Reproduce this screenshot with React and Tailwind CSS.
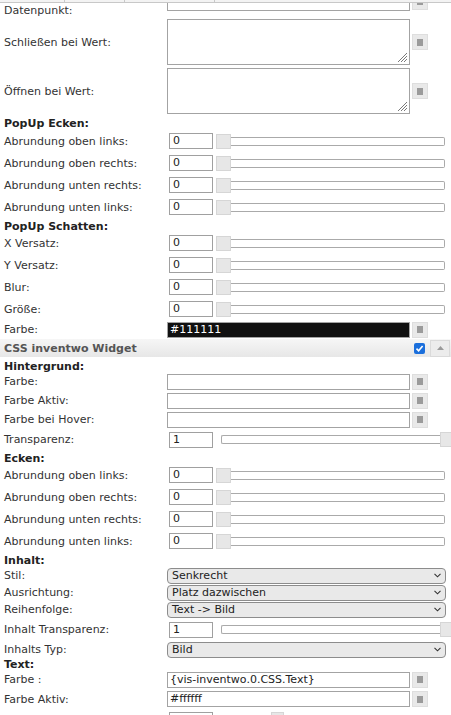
import React from 'react';

const Btn = () => (
  <div className="ml-[2px] flex h-[16px] w-[16px] shrink-0 items-center justify-center border border-[#dedede] bg-[#e9e9e9]">
    <div className="h-[7px] w-[6px] bg-[#9b9b9b]" />
  </div>
);

const Row = ({ label, h, children }) => (
  <div className={`flex items-center ${h}`}>
    <div className="w-[167px] shrink-0 pl-[4px] whitespace-nowrap">{label}</div>
    {children}
  </div>
);

const Head = ({ children, h }) => (
  <div className={`flex items-center pl-[4px] font-bold text-[#222] ${h}`}>{children}</div>
);

const TextInput = ({ value, dark }) => (
  <div className="flex items-center">
    <div
      className={`flex h-[16px] w-[243px] items-center border border-[#a3a3a3] pl-[2px] leading-[14px] ${
        dark ? 'bg-[#111111] text-white' : 'bg-white text-[#222]'
      }`}
    >
      {value}
    </div>
    <Btn />
  </div>
);

const Slider = ({ value = '0' }) => (
  <div className="flex items-center pl-[2px]">
    <div className="h-[16px] w-[44px] border border-[#a0a0a0] bg-white pl-[3px] leading-[14px] text-[#222]">{value}</div>
    <div className="ml-[3px] h-[15px] w-[15px] border border-[#d6d6d6] bg-[#e7e7e7]" />
    <div className="h-[9px] w-[214px] rounded-r-[2px] border border-l-0 border-[#aaaaaa] bg-white" />
  </div>
);

const SliderMax = ({ value = '1' }) => (
  <div className="flex items-center pl-[2px]">
    <div className="h-[16px] w-[44px] shrink-0 border border-[#a0a0a0] bg-white pl-[3px] leading-[14px] text-[#222]">{value}</div>
    <div className="ml-[8px] h-[9px] w-[219px] shrink-0 rounded-l-[2px] border border-r-0 border-[#aaaaaa] bg-white" />
    <div className="h-[15px] w-[14px] shrink-0 border border-[#d6d6d6] bg-[#e7e7e7]" />
  </div>
);

const Area = () => (
  <div className="flex items-center">
    <div className="relative h-[46px] w-[243px] border border-[#a3a3a3] bg-white">
      <svg className="absolute bottom-[1px] right-[1px]" width="11" height="11" viewBox="0 0 11 11">
        <path d="M10 1 L1 10 M10 4 L4 10 M10 7 L7 10" stroke="#7a7a7a" strokeWidth="1" />
      </svg>
    </div>
    <Btn />
  </div>
);

const Select = ({ value }) => (
  <div className="flex h-[16px] w-[279px] items-center justify-between rounded-[4px] border border-[#8c8c8c] bg-[#e9e9e9] pl-[4px] pr-[4px] text-[#222]">
    <span>{value}</span>
    <svg width="7" height="5" viewBox="0 0 7 5">
      <path d="M0.5 0.8 L3.5 3.8 L6.5 0.8" stroke="#333" strokeWidth="1.1" fill="none" />
    </svg>
  </div>
);

export default function App() {
  return (
    <div className="relative h-[715px] w-[451px] overflow-hidden bg-white font-['DejaVu_Sans','Verdana',sans-serif] text-[11px] leading-[13px] text-[#333]">
      <div className="absolute left-0 top-0 flex h-[3px] w-full border-b border-[#c8c8c8] bg-[#f3f3f3]">
        <div className="w-[65px] border-r border-[#c8c8c8]" />
        <div className="w-[60px] border-r border-[#c8c8c8]" />
        <div className="w-[90px] border-r border-[#c8c8c8]" />
      </div>

      <div className="flex h-[18px] items-start">
        <div className="w-[167px] shrink-0 pl-[4px] pt-[4px]">Datenpunkt:</div>
        <div className="h-[11px] w-[243px] border border-t-0 border-[#a3a3a3] bg-white" />
        <div className="ml-[2px] flex h-[10px] w-[16px] items-start justify-center border border-t-0 border-[#dedede] bg-[#e9e9e9]">
          <div className="h-[5px] w-[6px] bg-[#9b9b9b]" />
        </div>
      </div>

      <div className="mt-[1px]">
        <Row label="Schließen bei Wert:" h="h-[46px]">
          <Area />
        </Row>
      </div>
      <div className="mt-[3px]">
        <Row label="Öffnen bei Wert:" h="h-[46px]">
          <Area />
        </Row>
      </div>

      <Head h="h-[16px] pt-[2px]">PopUp Ecken:</Head>
      <Row label="Abrundung oben links:" h="h-[22px]"><Slider /></Row>
      <Row label="Abrundung oben rechts:" h="h-[22px]"><Slider /></Row>
      <Row label="Abrundung unten rechts:" h="h-[22px]"><Slider /></Row>
      <Row label="Abrundung unten links:" h="h-[22px]"><Slider /></Row>

      <Head h="h-[14px] pt-[2px]">PopUp Schatten:</Head>
      <Row label="X Versatz:" h="h-[22px]"><Slider /></Row>
      <Row label="Y Versatz:" h="h-[22px]"><Slider /></Row>
      <Row label="Blur:" h="h-[22px]"><Slider /></Row>
      <Row label="Größe:" h="h-[22px]"><Slider /></Row>
      <Row label="Farbe:" h="h-[19px]"><TextInput value="#111111" dark /></Row>

      <div className="flex h-[18px] items-center bg-gradient-to-b from-[#f6f6f6] to-[#e7e7e7]">
        <div className="flex-1 pl-[4px] font-bold text-[#555]">CSS inventwo Widget</div>
        <div className="flex h-[11px] w-[11px] items-center justify-center rounded-[2px] bg-[#1b6fdc]">
          <svg width="9" height="9" viewBox="0 0 9 9">
            <path d="M1.5 4.6 L3.6 6.7 L7.6 2" stroke="#fff" strokeWidth="1.6" fill="none" />
          </svg>
        </div>
        <div className="ml-[5px] mr-[1px] flex h-[17px] w-[20px] items-center justify-center border border-[#dadada] bg-[#ececec]">
          <svg width="7" height="4" viewBox="0 0 7 4">
            <path d="M0 4 L3.5 0 L7 4 Z" fill="#9a9a9a" />
          </svg>
        </div>
      </div>

      <Head h="h-[15px] pt-[3px]">Hintergrund:</Head>
      <Row label="Farbe:" h="h-[19px]"><TextInput /></Row>
      <Row label="Farbe Aktiv:" h="h-[19px]"><TextInput /></Row>
      <Row label="Farbe bei Hover:" h="h-[19px]"><TextInput /></Row>
      <Row label="Transparenz:" h="h-[21px]"><SliderMax /></Row>

      <Head h="h-[14px] pt-[2px]">Ecken:</Head>
      <Row label="Abrundung oben links:" h="h-[22px]"><Slider /></Row>
      <Row label="Abrundung oben rechts:" h="h-[22px]"><Slider /></Row>
      <Row label="Abrundung unten rechts:" h="h-[22px]"><Slider /></Row>
      <Row label="Abrundung unten links:" h="h-[22px]"><Slider /></Row>

      <Head h="h-[15px] pt-[1px]">Inhalt:</Head>
      <Row label="Stil:" h="h-[17px]"><Select value="Senkrecht" /></Row>
      <Row label="Ausrichtung:" h="h-[17px]"><Select value="Platz dazwischen" /></Row>
      <Row label="Reihenfolge:" h="h-[17px]"><Select value="Text -> Bild" /></Row>
      <Row label="Inhalt Transparenz:" h="h-[23px]"><SliderMax /></Row>
      <Row label="Inhalts Typ:" h="h-[17px]"><Select value="Bild" /></Row>

      <Head h="h-[12px]">Text:</Head>
      <Row label="Farbe :" h="h-[19px]"><TextInput value="{vis-inventwo.0.CSS.Text}" /></Row>
      <Row label="Farbe Aktiv:" h="h-[20px]"><TextInput value="#ffffff" /></Row>

      <div className="flex h-[22px] items-start pt-[3px]">
        <div className="w-[169px] shrink-0" />
        <div className="h-[16px] w-[44px] border border-[#a0a0a0] bg-white" />
        <div className="ml-[58px] h-[15px] w-[13px] border border-[#d6d6d6] bg-[#e7e7e7]" />
      </div>
    </div>
  );
}
